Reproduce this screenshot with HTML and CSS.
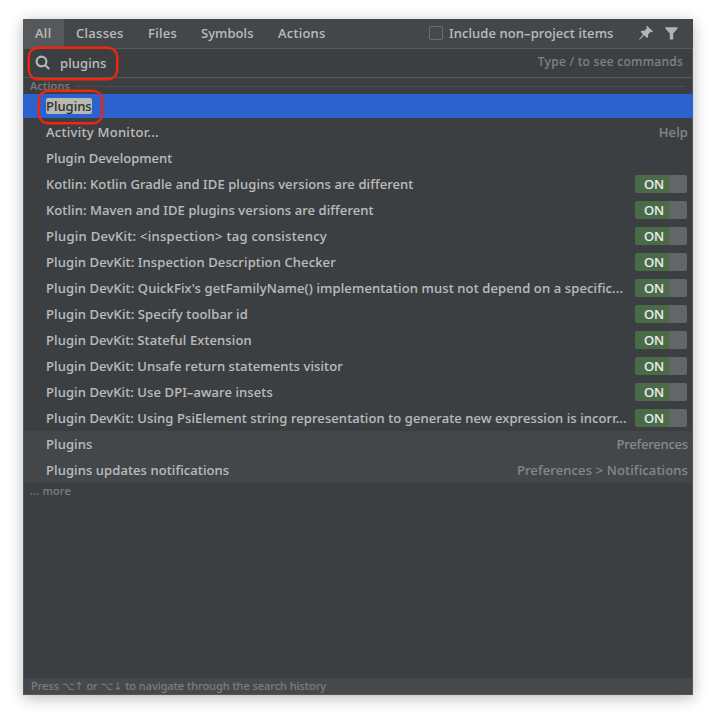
FILE: index.html
```
<!DOCTYPE html>
<html lang="en">
<head>
<meta charset="utf-8">
<title>Search Everywhere</title>
<link rel="stylesheet" href="styles.css">
</head>
<body>
<main class="window">
  <header class="tabs">
    <span class="tab tab-active">All</span>
    <span class="tab tab-classes">Classes</span>
    <span class="tab tab-files">Files</span>
    <span class="tab tab-symbols">Symbols</span>
    <span class="tab tab-actions">Actions</span>
    <label class="include"><span class="checkbox"></span><span>Include non–project items</span></label>
    <svg class="pin" width="16" height="16" viewBox="0 0 16 16"><path d="M9 .7 15.1 6.6 13.8 7.2 12.6 6.8 10.2 9.2 10 12.2 9 12.9 6.2 10.3 1.5 14.7 1 14.2 5.1 9.4 2.7 6.7 3.5 5.8 6.5 5.7 9 3.1 8.3 1.5Z"/></svg>
    <svg class="filter" width="13" height="13" viewBox="0 0 13 13"><path d="M.4.3H12.6V1.5L8.2 6.5V12.6H4.8V6.5L.4 1.5Z"/></svg>
  </header>
  <section class="search">
    <svg class="glass" width="16" height="16" viewBox="0 0 16 16"><circle cx="6.5" cy="6.5" r="4.9"/><path d="M10 10 14.2 14"/></svg>
    <span class="query">plugins</span>
    <span class="hint">Type / to see commands</span>
    <span class="mark mark-query"></span>
  </section>
  <div class="group"><span>Actions</span><i></i></div>
  <ul class="results">
    <li class="row selected"><span class="name"><b>Plugins</b></span><span class="mark mark-result"></span></li>
    <li class="row"><span class="name wide">Activity Monitor...</span><span class="path">Help</span></li>
    <li class="row"><span class="name tight">Plugin Development</span></li>
    <li class="row"><span class="name">Kotlin: Kotlin Gradle and IDE plugins versions are different</span><span class="toggle">ON</span></li>
    <li class="row"><span class="name">Kotlin: Maven and IDE plugins versions are different</span><span class="toggle">ON</span></li>
    <li class="row"><span class="name wide">Plugin DevKit: &lt;inspection&gt; tag consistency</span><span class="toggle">ON</span></li>
    <li class="row"><span class="name even">Plugin DevKit: Inspection Description Checker</span><span class="toggle">ON</span></li>
    <li class="row"><span class="name even">Plugin DevKit: QuickFix's getFamilyName() implementation must not depend on a specific...</span><span class="toggle">ON</span></li>
    <li class="row"><span class="name even">Plugin DevKit: Specify toolbar id</span><span class="toggle">ON</span></li>
    <li class="row"><span class="name">Plugin DevKit: Stateful Extension</span><span class="toggle">ON</span></li>
    <li class="row"><span class="name">Plugin DevKit: Unsafe return statements visitor</span><span class="toggle">ON</span></li>
    <li class="row"><span class="name">Plugin DevKit: Use DPI–aware insets</span><span class="toggle">ON</span></li>
    <li class="row"><span class="name">Plugin DevKit: Using PsiElement string representation to generate new expression is incorr...</span><span class="toggle">ON</span></li>
    <li class="row setting"><span class="name">Plugins</span><span class="path path-short">Preferences</span></li>
    <li class="row setting"><span class="name">Plugins updates notifications</span><span class="path">Preferences &gt; Notifications</span></li>
  </ul>
  <div class="more">... more</div>
  <footer class="footer">Press <kbd>⌥↑</kbd> or <kbd>⌥↓</kbd> to navigate through the search history</footer>
</main>
</body>
</html>
```
FILE: styles.css
```
* { box-sizing: border-box; }
body {
  margin: 0;
  padding: 19px 23px 27px;
  height: 722px;
  background: #fff;
  overflow: hidden;
  font: 500 13px/20px "Noto Sans", "Open Sans", sans-serif;
  color: #bbb;
  white-space: nowrap;
  -webkit-text-stroke: .1px;
}
.window {
  display: flex;
  flex-direction: column;
  width: 670px;
  height: 676px;
  background: #3c3f41;
  box-shadow: inset 0 0 0 1px #55585a, 0 3px 14px rgba(0, 0, 0, .28);
}
.tabs {
  display: flex;
  align-items: center;
  height: 30px;
  background: #434749;
  border-bottom: 1px solid #56595b;
  letter-spacing: .3px;
}
.tab { height: 29px; line-height: 29px; padding-left: 12px; }
.tab-active { width: 41px; background: #55595b; }
.tab-classes { width: 72px; }
.tab-files { width: 53px; }
.tab-symbols { width: 77px; letter-spacing: .05px; }
.tab-actions { width: 163px; letter-spacing: .25px; }
.include { display: flex; align-items: center; gap: 6px; width: 209px; margin-top: -1px; letter-spacing: .1px; }
.checkbox { flex: none; width: 14px; height: 14px; border: 1px solid #6b6e70; border-radius: 2px; background: #45494a; }
.pin { fill: #b2b4b5; margin-top: -1px; }
.filter { fill: #b2b4b5; margin: -1px 0 0 11px; }
.search {
  position: relative;
  display: flex;
  align-items: center;
  height: 29px;
  padding: 0 10px 0 12px;
  border-bottom: 1px solid #56595b;
}
.glass { fill: none; stroke: #b4b6b7; stroke-width: 2.1; }
.query { margin-left: 9px; letter-spacing: .1px; }
.hint { margin: -3px 0 0 auto; font-size: 12px; color: #7f8183; letter-spacing: .26px; }
.mark { position: absolute; z-index: 1; border: 2px solid #f3260d; border-radius: 10px; box-shadow: 0 0 0 .5px #f3260d; }
.mark-query { left: 5px; top: -2px; width: 90px; height: 33px; }
.mark-result { left: 15px; top: -4px; width: 65px; height: 34px; }
.group {
  display: flex;
  align-items: center;
  gap: 5px;
  height: 15px;
  padding: 0 8px 0 7px;
  font-size: 11px;
  line-height: 15px;
  color: #7a7c7e;
  letter-spacing: .2px;
}
.group i { flex: 1; height: 1px; background: #4b4e50; margin-top: 1px; }
.results { margin: 0; padding: 0; list-style: none; }
.row {
  position: relative;
  display: flex;
  align-items: center;
  justify-content: space-between;
  height: 26px;
  margin: 0 1px;
  padding: 0 4px 0 22px;
  letter-spacing: .1px;
}
.even { letter-spacing: .13px; }
.wide { letter-spacing: .28px; }
.tight { letter-spacing: 0; }
.selected { height: 24px; margin: 1px 0; padding-left: 23px; background: #2b62ce; }
.selected b { display: block; height: 16px; line-height: 16px; font-weight: 500; color: #303334; background: #b9b9b4; border-radius: 2px; letter-spacing: 0; }
.path { color: #858789; letter-spacing: .14px; }
.path-short { letter-spacing: -.2px; }
.toggle {
  width: 52px;
  height: 18px;
  margin-right: 1px;
  padding-left: 9px;
  border-radius: 2px;
  background: linear-gradient(90deg, #4a6b48 34px, #636566 34px);
  color: #eee;
  line-height: 18px;
  letter-spacing: -.2px;
}
.setting { background: #434749; }
.more { padding-left: 7px; font-size: 11px; line-height: 16px; color: #7a7c7e; letter-spacing: .15px; }
.footer {
  height: 16px;
  margin: auto 1px 1px;
  padding-left: 7px;
  background: #46494b;
  font-size: 11px;
  line-height: 16px;
  color: #7a7c7e;
  letter-spacing: -.04px;
}
.footer kbd { font: 11px/16px "DejaVu Sans", sans-serif; }
```
